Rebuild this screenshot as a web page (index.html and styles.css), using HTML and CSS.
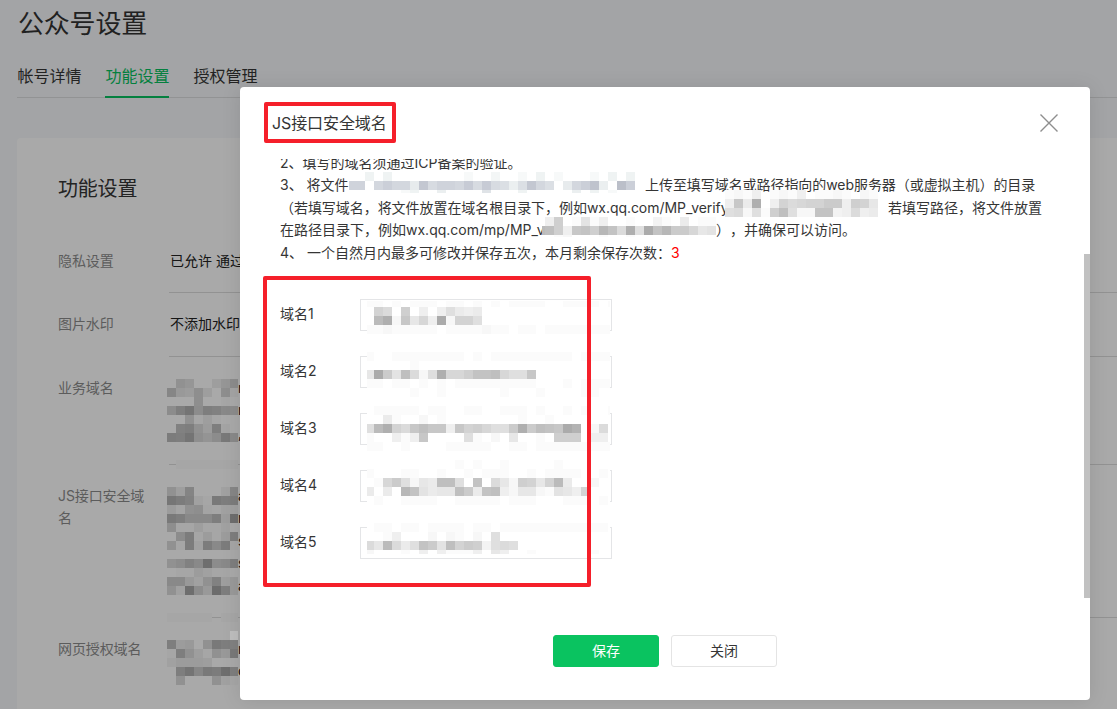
FILE: index.html
```html
<!DOCTYPE html>
<html lang="zh-CN">
<head>
<meta charset="utf-8">
<title>公众号设置</title>
<link rel="stylesheet" href="styles.css">
</head>
<body>
<main class="page">
  <h1 class="page-title">公众号设置</h1>
  <nav class="tabs">
    <a class="tab">帐号详情</a>
    <a class="tab tab-active">功能设置</a>
    <a class="tab">授权管理</a>
  </nav>
  <section class="card">
    <h2 class="card-title">功能设置</h2>
    <div class="row row-privacy"><span class="label">隐私设置</span><div class="value">已允许 通过名称</div></div>
    <div class="row row-mark"><span class="label">图片水印</span><div class="value">不添加水印</div></div>
    <div class="row row-biz"><span class="label">业务域名</span><div class="value masked"><svg class="mosaic" data-width="71" data-rows="ajhaaehl/ngfkeakc/aaakaaba/lqulqpml/aajbebaa/apqjfqca/rqukilsm/......../......../.bbbbbbb"></svg><div class="tails"><span>m</span><span>n</span><span>,</span></div></div></div>
    <div class="row row-js"><span class="label">JS接口安全域名</span><div class="value masked"><svg class="mosaic" data-width="71" data-rows="jeoaaadn/trpdbsqr/fcjkcbdd/sqmmmqfw/kbbebbda/alrbfbfq/jbrdrmrb/......../jlpmwlmq/abbfdbba/mmgdjpeg/jdwlgxqg/......../......../bbbbb.bb"></svg><div class="tails"><span>a</span><span>n</span><span>s</span><span>s</span><span>a</span></div></div></div>
    <div class="row row-web"><span class="label">网页授权域名</span><div class="value masked"><svg class="mosaic" data-width="71" data-rows="qfgajsqp/bqjebjgs/dfffeaaa/aqunsrwq/ajaaajdb"></svg><div class="tails"><span>n</span><span>c</span></div></div></div>
  </section>
</main>
<div class="mask"></div>
<div class="speck"></div>

<div class="dialog">
  <header class="dialog-head">
    <h3 class="dialog-title">JS接口安全域名</h3>
    <svg class="close" viewBox="0 0 20 20"><path d="M1.5 1.5 18.5 18.5M18.5 1.5 1.5 18.5"/></svg>
  </header>
  <div class="dialog-body">
    <div class="notes">
      <p class="note">2、填写的域名须通过ICP备案的验证。</p>
      <p class="note"><span class="seg seg-file">3、 将文件</span><svg class="mosaic" data-tint="1" data-clip-left="2" data-clip-bottom="6" data-width="286" data-rows="..e.e........c..d..c.e.c...c.e.e/mmalnllgpkmmlokokjfjpljaglnqfarn/......ce..f....i...e.....f.e.c.."></svg><span class="seg seg-gap">上传至填写域名或路径指向的web服务器（或虚拟主机）的目录</span></p>
      <p class="note"><span class="seg seg-verify">（若填写域名，将文件放置在域名根目录下，例如wx.qq.com/MP_verify</span><svg class="mosaic" data-width="153" data-rows="bcbe.bcbe.bbcb.cb/eofuaeljkllnnemlg/ijcibmqiccppdejef"></svg><span class="seg seg-gap">若填写路径，将文件放置</span></p>
      <p class="note"><span class="seg seg-mp">在路径目录下，例如wx.qq.com/mp/MP_ve</span><svg class="mosaic" data-clip-left="6" data-clip-bottom="7" data-width="174" data-rows="aemabhbeaabaadbafabb/rqmeopmspjuivpsnnkgh/a.bc...b..b........."></svg><span class="seg">），并确保可以访问。</span></p>
      <p class="note">4、 一个自然月内最多可修改并保存五次，本月剩余保存次数：<em class="left-count">3</em></p>
    </div>
    <form class="form">
      <div class="field"><label class="field-label">域名1</label><div class="input"><svg class="mosaic" data-clip-left="2" data-clip-top="3" data-width="243" data-rows="bb.b.bbb.bb.b.b.bbbb..bbbb.b/.lj.m.e.eifef............../.rucogkevclli............../bbcbbbbbabbbbcbbabbabbbbbbbb"></svg></div></div>
      <div class="field"><label class="field-label">域名2</label><div class="input"><svg class="mosaic mosaic-up" data-clip-left="2" data-width="243" data-rows="baabbbbbbbbababbbbbbbbbabbbb/.....b....................../gvnhqjciukkmppqkiio........./bbabbabababbbbbbbbbaaababbbb/.....b..b......b...b....bb.."></svg></div></div>
      <div class="field"><label class="field-label">域名3</label><div class="input"><svg class="mosaic mosaic-up3" data-clip-left="2" data-width="243" data-rows="abbbbbabbaabbaabbbabaababaab/..fb..c.b........b..b......./iruljoqooeolmkiinunqpovtacj./b..ebeo....ib.c.g..b.mmmaee./bbaabaaaabbbbbaabbabbbbbbbbb"></svg></div></div>
      <div class="field"><label class="field-label">域名4</label><div class="input"><svg class="mosaic mosaic-up4" data-clip-left="2" data-width="243" data-rows="..........b.b..b.....b....../baaabbaabaababbbaababbbbaaba/.bknicgfqqi.p.jgcmlglrf..c../f.f.sphfggqnfpqecggcbhgel.../abaabbbbaabbbbbabbbaaabbbaba"></svg></div></div>
      <div class="field"><label class="field-label">域名5</label><div class="input"><svg class="mosaic mosaic-up" data-clip-left="2" data-clip-bottom="5" data-width="243" data-rows="abbabbabbbbabbabbbbbbbbbbbba/..be...c.cb.c.i............./jgrjfipnhqlnmdiji.........../c...b.e.ebbbe.ge..b......b.."></svg></div></div>
    </form>
    <div class="scrollbar"></div>
  </div>
  <footer class="dialog-foot">
    <button class="btn btn-primary">保存</button>
    <button class="btn">关闭</button>
  </footer>
</div>
<div class="marker marker-title"></div>
<div class="marker marker-form"></div>
<script src="mosaic.js"></script>
</body>
</html>
```
FILE: styles.css
```css
* { box-sizing: border-box; }
html, body { height: 100%; overflow: hidden; }
body {
  margin: 0;
  background: #f6f8fa;
  color: #353535;
  font: 14px/22.4px Inter, "Noto Sans CJK SC", sans-serif;
  text-spacing-trim: space-all;
}
h1, h2, h3, p { margin: 0; font-weight: 400; }

.page { padding: 5px 0 0 17px; }
.page-title { font-size: 26px; line-height: 38px; color: #333; padding-left: 1px; letter-spacing: -0.2px; }
.tabs {
  display: flex;
  gap: 24px;
  height: 55px;
  padding-top: 20px;
  border-bottom: 1px solid #dcdee0;
}
.tab { height: 35px; padding-left: 0.4px; font-size: 16px; line-height: 26px; width: 64px; white-space: nowrap; }
.tab-active { color: #07c160; border-bottom: 2px solid #07c160; }

.card { height: 571px; margin-top: 40px; padding: 35px 0 0 41px; background: #fff; border-radius: 4px 0 0 0; }
.card-title { font-size: 20px; line-height: 32px; height: 56px; color: #353535; letter-spacing: -0.2px; }
.row { display: flex; }
.label { width: 111px; padding: 20px 24px 0 0; color: #8c8c8c; letter-spacing: -0.1px; }
.value { flex: 1; padding: 20px 0 0 1px; border-bottom: 1px solid #dcdcdc; white-space: nowrap; color: #222; }
.row-privacy { height: 64px; }
.row-privacy .label, .row-privacy .value { padding-top: 21px; }
.row-mark { height: 64px; }
.row-biz { height: 108px; }
.row-js { height: 153px; }
.row-web { height: 91px; }
.row .masked { display: flex; padding-top: 22px; padding-left: 0; }
.row-web .masked { border-bottom: 0; }
.masked .mosaic { margin-left: -2px; }
.tails { display: flex; flex-direction: column; margin-top: -2px; }
.mosaic { display: block; flex: none; }

.mask { position: absolute; inset: 0; background: rgba(0, 0, 0, .337); }
.speck { position: absolute; left: 230px; top: 631px; width: 8px; height: 9px; background: #bebebe; }

.dialog {
  position: absolute;
  left: 240px;
  top: 87px;
  width: 850px;
  height: 613px;
  display: flex;
  flex-direction: column;
  background: #fff;
  border-radius: 4px;
  box-shadow: 0 1px 20px rgba(0, 0, 0, .1);
}
.dialog-head { height: 72px; display: flex; justify-content: space-between; align-items: center; padding: 0 31px 0 32px; }
.dialog-title { font-size: 16px; line-height: 26px; letter-spacing: -0.1px; }
.close { width: 20px; height: 20px; fill: none; stroke: #8e8e8e; stroke-width: 1.4; }
.dialog-body { position: relative; height: 439px; padding-left: 40px; overflow: hidden; }
.notes { margin-top: -7px; }
.note { height: 22.5px; white-space: nowrap; }
.note:has(.seg) { display: flex; }
.note:nth-child(2) .seg, .note:nth-child(4) .seg { margin-top: -0.5px; }
.note:nth-child(2) .mosaic, .note:nth-child(4) .mosaic { margin-top: -2.5px; }
.note:nth-child(3) .mosaic { margin-top: -7px; }
.seg { flex: none; }
.seg-file { width: 69px; }
.seg-verify { width: 445px; letter-spacing: -0.05px; }
.seg-mp { width: 262px; }
.seg-gap { margin-left: 10px; }
.note:nth-child(2) .seg-gap { letter-spacing: -0.06px; }
.left-count { font-style: normal; color: #f00; }
.form { display: flex; flex-direction: column; gap: 25px; margin-top: 34.5px; }
.field { display: flex; height: 32px; }
.field-label { width: 80px; line-height: 30px; }
.input { width: 252px; height: 32px; border: 1px solid #e4e5e7; padding-left: 6px; }
.input .mosaic { margin-top: 1px; }
.input .mosaic-up { margin-top: -5px; }
.input .mosaic-up3 { margin-top: -8px; }
.input .mosaic-up4 { margin-top: -11px; }
.scrollbar { position: absolute; right: 0; top: 95px; width: 6px; height: 344px; background: #c1c1c1; }

.dialog-foot { display: flex; justify-content: center; gap: 12px; padding-top: 37px; }
.btn {
  width: 106px;
  height: 32px;
  padding: 0;
  border: 1px solid #e4e4e4;
  border-radius: 3px;
  background: #fff;
  color: #353535;
  font: inherit;
}
.btn-primary { border-color: #0ac360; background: #0ac360; color: #fff; }

.marker { position: absolute; border: 4px solid #f51f2a; border-radius: 2px; }
.marker-title { left: 264px; top: 102px; width: 132px; height: 41px; }
.marker-form { left: 263px; top: 276px; width: 328px; height: 311px; }
```
FILE: mosaic.js
```js
// Each letter is one 9px cell: "a" is white and every further letter is 4 levels darker.
const CELL = 9;
for (const svg of document.querySelectorAll('.mosaic')) {
  const d = svg.dataset;
  const rows = d.rows.split('/');
  const left = +(d.clipLeft || 0), top = +(d.clipTop || 0);
  const width = Math.min(+d.width, rows[0].length * CELL - left);
  const height = rows.length * CELL - top - (d.clipBottom || 0);
  svg.setAttribute('viewBox', `${left} ${top} ${width} ${height}`);
  svg.setAttribute('width', width);
  svg.setAttribute('height', height);
  svg.setAttribute('shape-rendering', 'crispEdges');
  rows.forEach((row, y) => [...row].forEach((ch, x) => {
    if (ch === '.') return;
    const step = ch.charCodeAt(0) - 97;
    const v = 255 - step * 4;
    const blue = d.tint ? Math.min(255, v + Math.min(step, 14)) : v;
    const green = d.tint ? Math.min(255, v + Math.min(step, 4)) : v;
    const r = document.createElementNS('http://www.w3.org/2000/svg', 'rect');
    r.setAttribute('x', x * CELL);
    r.setAttribute('y', y * CELL);
    r.setAttribute('width', CELL);
    r.setAttribute('height', CELL);
    r.setAttribute('fill', `rgb(${v},${green},${blue})`);
    svg.append(r);
  }));
}
```
